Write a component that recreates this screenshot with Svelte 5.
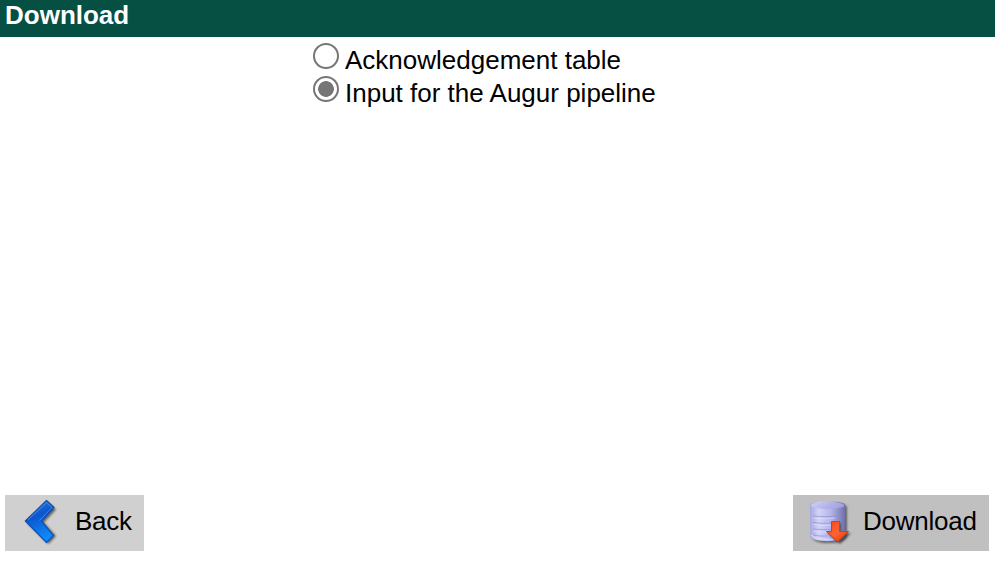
<script>
  let selected = $state('augur');
  const options = [
    { id: 'ack', label: 'Acknowledgement table' },
    { id: 'augur', label: 'Input for the Augur pipeline' }
  ];
</script>

<div class="dialog">
  <header>Download</header>
  <main>
    <div class="options">
      {#each options as option}
        <label>
          <input type="radio" name="format" value={option.id} bind:group={selected} />
          <span>{option.label}</span>
        </label>
      {/each}
    </div>
  </main>
  <footer>
    <button class="back">
      <svg width="44" height="54" viewBox="0 0 44 54" aria-hidden="true">
        <defs>
          <linearGradient id="blue" x1="0" y1="0" x2="0.3" y2="1">
            <stop offset="0" stop-color="#3b83e2" />
            <stop offset="0.45" stop-color="#0755cf" />
            <stop offset="1" stop-color="#088af8" />
          </linearGradient>
          <filter id="soft" x="-30%" y="-30%" width="160%" height="160%">
            <feGaussianBlur stdDeviation="1.2" />
          </filter>
          <filter id="edge" x="-10%" y="-10%" width="120%" height="120%">
            <feGaussianBlur stdDeviation="0.4" />
          </filter>
        </defs>
        <path d="M9 27.500 30 7 38 14.500 26 27.500 38 41 30.500 49Z" fill="#333" opacity=".7" filter="url(#soft)" />
        <g filter="url(#edge)">
          <path d="M7.300 26 28.500 5.500 36 12.500 23.500 26 35.500 40.500 28.500 47.500Z" fill="url(#blue)" stroke="#1450ae" stroke-width="1.200" stroke-linejoin="round" />
          <path d="M10 25 28.500 7.500 34 12.500 21.500 25.500" fill="none" stroke="#65a3ee" stroke-width="1" opacity=".6" />
        </g>
      </svg>
      <span>Back</span>
    </button>
    <button class="download">
      <svg width="50" height="54" viewBox="0 0 50 54" aria-hidden="true">
        <defs>
          <linearGradient id="drum" x1="0" y1="0" x2="1" y2="0">
            <stop offset="0" stop-color="#a7a7dc" />
            <stop offset="0.25" stop-color="#d3d3f9" />
            <stop offset="0.6" stop-color="#b4b4ea" />
            <stop offset="1" stop-color="#7070aa" />
          </linearGradient>
          <linearGradient id="lid" x1="0" y1="0" x2="1" y2="0.3">
            <stop offset="0" stop-color="#d0d0f8" />
            <stop offset="1" stop-color="#a2a2df" />
          </linearGradient>
          <linearGradient id="orange" x1="0" y1="0" x2="1" y2="1">
            <stop offset="0" stop-color="#f0441a" />
            <stop offset="0.5" stop-color="#ff6430" />
            <stop offset="1" stop-color="#df3308" />
          </linearGradient>
          <filter id="haze" x="-30%" y="-30%" width="160%" height="160%">
            <feGaussianBlur stdDeviation="1.2" />
          </filter>
          <filter id="smooth" x="-10%" y="-10%" width="120%" height="120%">
            <feGaussianBlur stdDeviation="0.5" />
          </filter>
        </defs>
        <path d="M7 12Q7 8 24 8T42 12V42Q39 48 24 48T7 42Z" fill="#333" opacity=".65" filter="url(#haze)" />
        <g filter="url(#smooth)">
          <path d="M5 10C5 5 40 5 40 10V42C38 47.500 7 47.500 5 42Z" fill="url(#drum)" />
          <ellipse cx="22.500" cy="10.500" rx="16.700" ry="3.500" fill="url(#lid)" />
          <path d="M8 21Q20 22.500 34 21M8 27.500Q18 29 27 28M8 34Q18 35 27 34.500M8 40Q15 41.500 22 41" fill="none" stroke="#8c8cc8" stroke-width="1" opacity=".65" />
          <path d="M8 23Q18 24.500 30 23M8 29.500Q18 31 27 30M8 36Q16 37.500 22 37" fill="none" stroke="#e6e6ff" stroke-width="1" opacity=".55" />
          <path d="M6 40Q12 45 28 44.500" fill="none" stroke="#dedeff" stroke-width="1.500" opacity=".7" />
        </g>
        <path d="M28 28H36V38H46L35 49 22 38H28Z" fill="#333" opacity=".65" filter="url(#haze)" />
        <path d="M26.500 26.500H34.500V36.500H43.500L32.700 46.800 21.500 36.500H26.500Z" fill="url(#orange)" stroke="#d93a14" stroke-width="1" stroke-linejoin="round" filter="url(#smooth)" />
      </svg>
      <span>Download</span>
    </button>
  </footer>
</div>

<style>
  :global(body) {
    margin: 0;
    background: #fff;
  }
  .dialog {
    display: flex;
    flex-direction: column;
    box-sizing: border-box;
    height: 568px;
    padding-bottom: 17px;
    font: 26px/33px "Liberation Sans", Arial, sans-serif;
    color: #000;
  }
  header {
    box-sizing: border-box;
    height: 37px;
    padding-left: 5px;
    background: #064f43;
    color: #fff;
    font-weight: bold;
    line-height: 30px;
  }
  main {
    flex: 1;
    padding: 6px 0 0 313px;
  }
  label {
    display: flex;
    align-items: flex-start;
    height: 33px;
  }
  input {
    appearance: none;
    box-sizing: border-box;
    flex: none;
    width: 26px;
    height: 26px;
    margin: 0 6px 0 0;
    border: 2px solid #767676;
    border-radius: 50%;
    background: #fff;
  }
  input:checked {
    background: radial-gradient(circle, #767676 7.5px, #fff 8.2px);
  }
  label span {
    line-height: 34px;
    white-space: nowrap;
  }
  footer {
    display: flex;
    justify-content: space-between;
    padding: 0 6px 0 5px;
  }
  button {
    display: flex;
    align-items: flex-start;
    box-sizing: border-box;
    height: 56px;
    padding: 0;
    border: 0;
    font: inherit;
    color: inherit;
    line-height: 53px;
    letter-spacing: -0.25px;
  }
  .back {
    width: 139px;
    padding-left: 13px;
    background: #d0d0d0;
  }
  .back span {
    margin-left: 13px;
  }
  .download {
    width: 196px;
    padding-left: 12px;
    background: #c0c0c0;
  }
  .download span {
    margin-left: 8px;
  }
</style>
